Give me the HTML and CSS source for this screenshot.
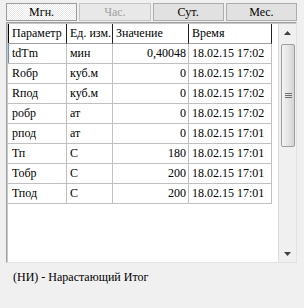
FILE: index.html
```html
<!DOCTYPE html>
<html>
<head>
<meta charset="utf-8">
<link rel="stylesheet" href="styles.css">
</head>
<body>
<div class="window">
  <div class="tabs">
    <div class="tab pressed">Мгн.</div>
    <div class="tab disabled">Час.</div>
    <div class="tab">Сут.</div>
    <div class="tab">Мес.</div>
  </div>
  <div class="frame">
    <div class="grid">
      <div class="row head">
        <div class="cell">Параметр</div>
        <div class="cell">Ед. изм.</div>
        <div class="cell">Значение</div>
        <div class="cell">Время</div>
      </div>
      <div class="row focus">
        <div class="cell">tdTm</div>
        <div class="cell">мин</div>
        <div class="cell num">0,40048</div>
        <div class="cell">18.02.15 17:02</div>
      </div>
      <div class="row">
        <div class="cell">Rобр</div>
        <div class="cell">куб.м</div>
        <div class="cell num">0</div>
        <div class="cell">18.02.15 17:02</div>
      </div>
      <div class="row">
        <div class="cell">Rпод</div>
        <div class="cell">куб.м</div>
        <div class="cell num">0</div>
        <div class="cell">18.02.15 17:02</div>
      </div>
      <div class="row">
        <div class="cell">pобр</div>
        <div class="cell">ат</div>
        <div class="cell num">0</div>
        <div class="cell">18.02.15 17:02</div>
      </div>
      <div class="row">
        <div class="cell">pпод</div>
        <div class="cell">ат</div>
        <div class="cell num">0</div>
        <div class="cell">18.02.15 17:01</div>
      </div>
      <div class="row">
        <div class="cell">Тп</div>
        <div class="cell">С</div>
        <div class="cell num">180</div>
        <div class="cell">18.02.15 17:01</div>
      </div>
      <div class="row">
        <div class="cell">Тобр</div>
        <div class="cell">С</div>
        <div class="cell num">200</div>
        <div class="cell">18.02.15 17:01</div>
      </div>
      <div class="row">
        <div class="cell">Тпод</div>
        <div class="cell">С</div>
        <div class="cell num">200</div>
        <div class="cell">18.02.15 17:01</div>
      </div>
    </div>
    <div class="scrollbar">
      <div class="arrow">
        <svg width="7" height="4" viewBox="0 0 7 4"><polygon points="3.5,0 7,4 0,4" fill="#404040"/></svg>
      </div>
      <div class="track">
        <div class="thumb">
          <svg width="7" height="5" viewBox="0 0 7 5"><rect x="0" y="0" width="7" height="1" fill="#6e6e6e"/><rect x="0" y="2" width="7" height="1" fill="#6e6e6e"/><rect x="0" y="4" width="7" height="1" fill="#6e6e6e"/></svg>
        </div>
      </div>
      <div class="arrow">
        <svg width="7" height="4" viewBox="0 0 7 4"><polygon points="0,0 7,0 3.5,4" fill="#404040"/></svg>
      </div>
    </div>
  </div>
  <div class="note">(НИ) - Нарастающий Итог</div>
</div>
</body>
</html>
```
FILE: styles.css
```css
html, body {
  margin: 0;
  padding: 0;
  background: #f0f0f0;
}
body {
  font-family: "Liberation Serif", "Times New Roman", serif;
  font-size: 12px;
  color: #000;
}
.window {
  width: 304px;
  height: 308px;
  padding: 3px 7px 0 6px;
  box-sizing: border-box;
}
.tabs {
  display: flex;
  gap: 2px;
  height: 18px;
}
.tab {
  flex: 1;
  box-sizing: border-box;
  border: 1px solid #adadad;
  background: #e1e1e1;
  text-align: center;
  line-height: 16px;
}
.tab.pressed {
  border-color: #9c9c9c;
  background: repeating-conic-gradient(#ffffff 0 25%, #e8e8e8 0 50%) 0 0 / 2px 2px;
}
.tab.disabled {
  color: #a0a0a0;
  border-color: #c4c4c4;
  background: #e8e8e8;
}
.frame {
  margin-top: 1px;
  height: 241px;
  box-sizing: border-box;
  border: 1px solid;
  border-color: #a0a0a0 #e3e3e3 #e3e3e3 #a0a0a0;
  box-shadow: inset 1px 1px 0 #c8c8c8;
  background: #fff;
  display: flex;
  padding: 1px 0 0 1px;
}
.grid {
  flex: 1;
}
.row {
  display: grid;
  grid-template-columns: 59px 46px 76px 83px;
  height: 20px;
}
.cell {
  box-sizing: border-box;
  border-right: 1px solid #c0c0c0;
  border-bottom: 1px solid #c0c0c0;
  padding-left: 3px;
  line-height: 19px;
  white-space: nowrap;
  overflow: hidden;
}
.cell.num {
  text-align: right;
  padding-left: 0;
  padding-right: 2px;
}
.row.head .cell {
  border-right-color: #202020;
  border-bottom-color: #a0a0a0;
  background: #fff;
}
.row.head .cell:first-child {
  box-shadow: inset 1px 0 0 #000;
  padding-left: 4px;
}
.row.focus .cell:first-child {
  box-shadow: inset 1px 0 0 #5b8fd0;
  padding-left: 4px;
}
.row .cell:first-child {
  padding-left: 4px;
}
.scrollbar {
  width: 17px;
  display: flex;
  flex-direction: column;
  border-left: 1px solid #dcdcdc;
  background: #f0f0f0;
}
.arrow {
  height: 17px;
  display: flex;
  align-items: center;
  justify-content: center;
}
.track {
  flex: 1;
  padding-top: 3px;
}
.thumb {
  margin: 0 1px 0 2px;
  height: 103px;
  box-sizing: border-box;
  border: 1px solid #9e9e9e;
  border-radius: 2px;
  background: linear-gradient(to right, #f4f4f4, #e2e2e2 60%, #d4d4d4);
  display: flex;
  align-items: center;
  justify-content: center;
}
.note {
  margin-top: 7px;
  padding-left: 7px;
  line-height: 15px;
}
```
